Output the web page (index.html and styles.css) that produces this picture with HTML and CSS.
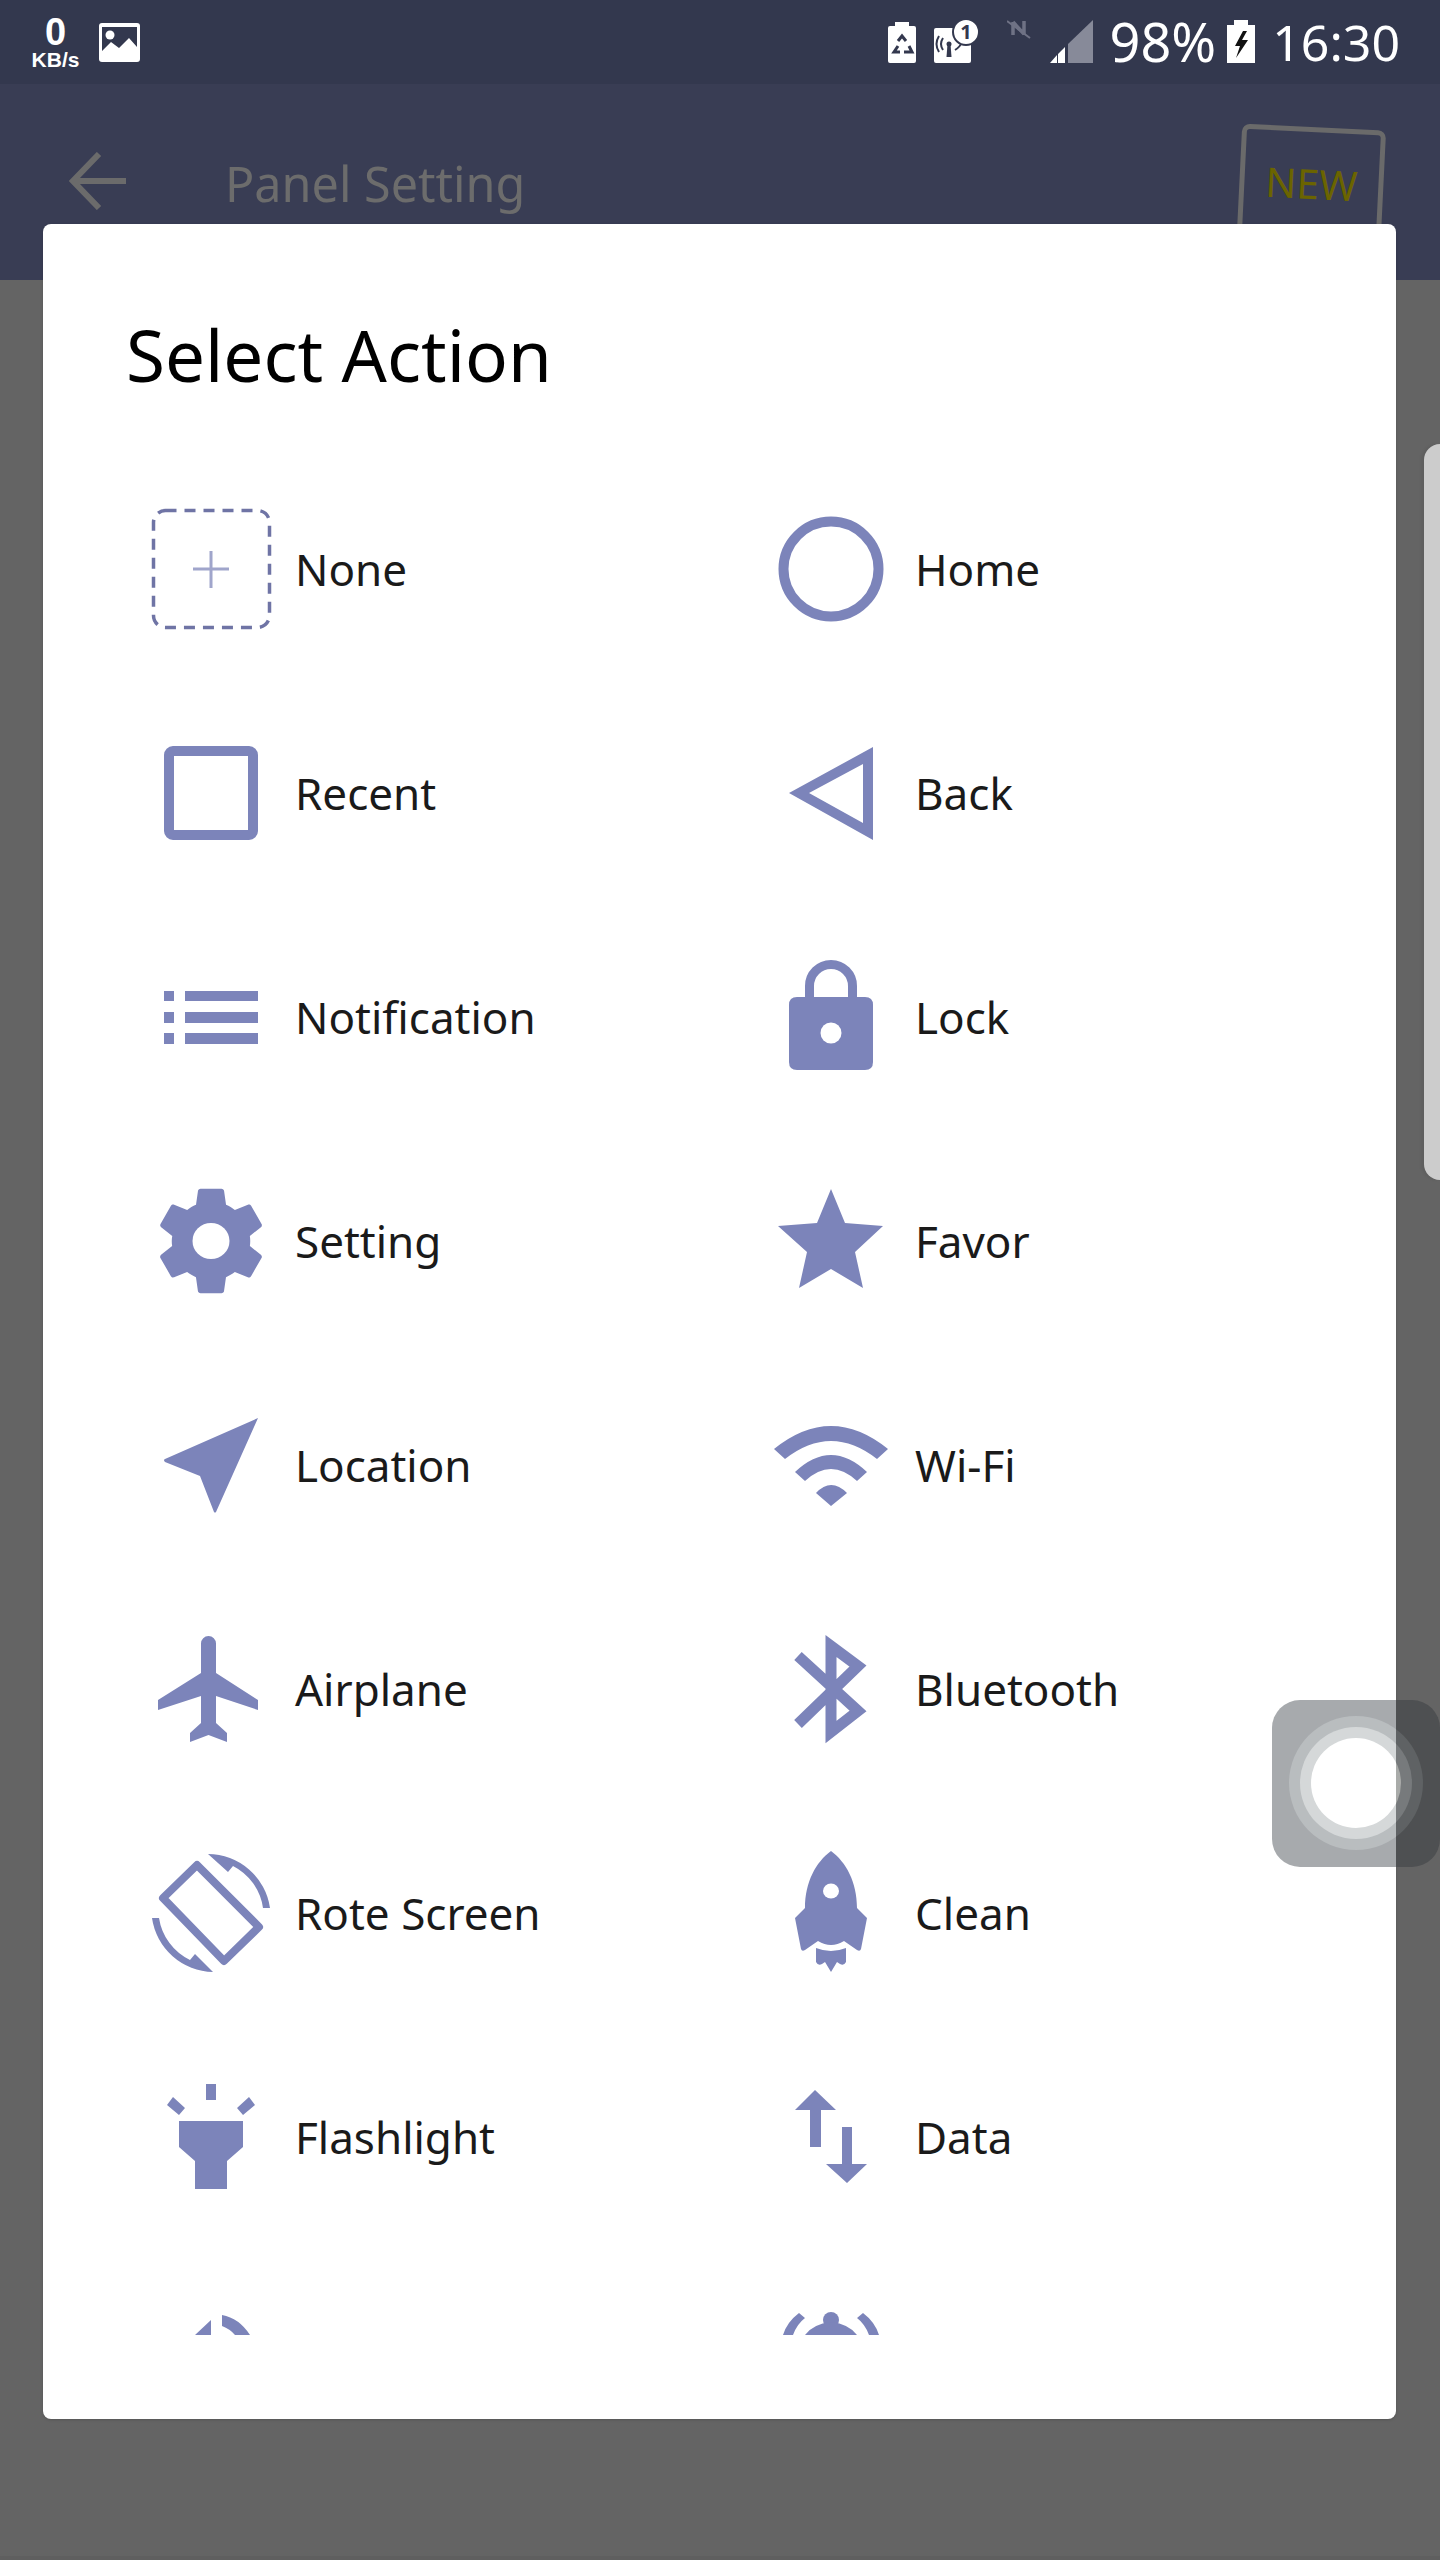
FILE: index.html
```html
<!DOCTYPE html>
<html lang="en">
<head>
    <meta charset="UTF-8">
    <meta name="viewport" content="width=device-width, initial-scale=1.0">
    <title>Select Action</title>
    <link rel="stylesheet" href="styles.css">
</head>
<body>
    <div class="status-bar">
        <div class="status-left">
            <div class="speed">
                <span class="speed-num">0</span>
                <span class="speed-unit">KB/s</span>
            </div>
            <svg class="st-image" width="41" height="39" viewBox="0 0 41 39">
                <rect width="41" height="39" rx="3" fill="#fff"/>
                <rect x="3" y="4" width="35" height="30" fill="#33384e"/>
                <circle cx="11" cy="12" r="4.5" fill="#fff"/>
                <path d="M3 28 L12 19 L20 25 L30 15 L38 24 V34 H3 Z" fill="#fff"/>
            </svg>
        </div>
        <div class="status-right">
            <svg class="st-recycle" width="28" height="41" viewBox="0 0 28 41">
                <path d="M7 0 H21 V4 H26 Q28 4 28 6 V39 Q28 41 26 41 H2 Q0 41 0 39 V6 Q0 4 2 4 H7 Z" fill="#fff"/>
                <path d="M10 19 L14 14 L18 19" fill="none" stroke="#33384e" stroke-width="3"/>
                <path d="M10 24 L6 30 H12" fill="none" stroke="#33384e" stroke-width="3"/>
                <path d="M21 24 L24 30 H16" fill="none" stroke="#33384e" stroke-width="3"/>
            </svg>
            <svg class="st-antenna" width="46" height="44" viewBox="0 0 46 44">
                <rect y="9" width="37" height="35" rx="2" fill="#fff"/>
                <circle cx="15" cy="25" r="2.5" fill="#33384e"/>
                <path d="M13.5 25 H16.5 L17.5 38 H12.5 Z" fill="#33384e"/>
                <path d="M9 19 Q5 25 9 31 M5 17 Q0 25 5 33 M21 31 Q26 28 28 23" fill="none" stroke="#33384e" stroke-width="2"/>
                <circle cx="32" cy="13" r="13" fill="#fff" stroke="#33384e" stroke-width="2"/>
                <text class="st-badge" x="32" y="20" text-anchor="middle">1</text>
            </svg>
            <svg class="st-nfc" width="24" height="19" viewBox="0 0 24 19">
                <path d="M6 2 V15 M17 1 V15 M6 2 L17 14" fill="none" stroke="#6f7285" stroke-width="3.5"/>
                <path d="M0 1 L23 18" fill="none" stroke="#6f7285" stroke-width="2"/>
            </svg>
            <svg class="st-signal" width="43" height="43" viewBox="0 0 43 43">
                <path d="M18 43 V24 L43 0 V43 Z" fill="#878a99"/>
                <path d="M0 43 L7 35 V43 Z M8 34 L15 27 V43 H8 Z" fill="#fff"/>
            </svg>
            <span class="st-text st-percent">98%</span>
            <svg class="st-charge" width="28" height="43" viewBox="0 0 28 43">
                <path d="M7 0 H21 V5 H28 V43 H0 V5 H7 Z" fill="#fff"/>
                <path d="M16 11 L8 26 H13 L9 38 L21 20 H15 L20 11 Z" fill="#111"/>
            </svg>
            <span class="st-text st-time">16:30</span>
        </div>
    </div>

    <div class="toolbar">
        <svg class="back-arrow" width="58" height="58" viewBox="0 0 58 58">
            <path d="M57 29 H5 M30 2 L4 29 L30 56" fill="none" stroke="#6b6b6b" stroke-width="6"/>
        </svg>
        <span class="toolbar-title">Panel Setting</span>
        <div class="new-badge"><span>NEW</span></div>
    </div>

    <div class="dialog">
        <h2 class="dialog-title">Select Action</h2>
        <div class="action-list">
            <div class="action">
                <svg class="icon" viewBox="0 0 120 120">
                    <rect class="dash" x="2.5" y="0.5" width="116" height="117" rx="12"/>
                    <path class="plus" d="M42 59 H78 M60 41 V78"/>
                </svg>
                <span>None</span>
            </div>
            <div class="action">
                <svg class="icon" viewBox="0 0 120 120">
                    <circle class="line" cx="60" cy="59" r="47.5" stroke-width="10"/>
                </svg>
                <span>Home</span>
            </div>
            <div class="action">
                <svg class="icon" viewBox="0 0 120 120">
                    <rect class="line" x="18" y="17" width="84" height="84" rx="4" stroke-width="10"/>
                </svg>
                <span>Recent</span>
            </div>
            <div class="action">
                <svg class="icon" viewBox="0 0 120 120">
                    <path fill-rule="evenodd" d="M18 59 L102 13 V106 Z M38 59 L92 89 V30 Z"/>
                </svg>
                <span>Back</span>
            </div>
            <div class="action">
                <svg class="icon" viewBox="0 0 120 120">
                    <path d="M13 33 H23 V43 H13 Z M34 33 H107 V43 H34 Z M13 54 H23 V65 H13 Z M34 54 H107 V65 H34 Z M13 75 H23 V86 H13 Z M34 75 H107 V86 H34 Z"/>
                </svg>
                <span>Notification</span>
            </div>
            <div class="action">
                <svg class="icon" viewBox="0 0 120 120">
                    <path class="line" stroke-width="9" d="M38.5 42 V28 a21.5 21.5 0 0 1 43 0 V42"/>
                    <path d="M26 39 H94 Q102 39 102 47 V104 Q102 112 94 112 H26 Q18 112 18 104 V47 Q18 39 26 39 Z"/>
                    <circle class="hole" cx="60" cy="75" r="10.5"/>
                </svg>
                <span>Lock</span>
            </div>
            <div class="action">
                <svg class="icon" viewBox="0 0 120 120">
                    <g transform="translate(60 59) scale(5.45) translate(-12 -12)">
                        <path d="M19.14 12.94c.04-.3.06-.61.06-.94 0-.32-.02-.64-.07-.94l2.03-1.58c.18-.14.23-.41.12-.61l-1.92-3.32c-.12-.22-.37-.29-.59-.22l-2.39.96c-.5-.38-1.03-.7-1.62-.94L14.4 2.81c-.04-.24-.24-.41-.48-.41h-3.84c-.24 0-.43.17-.47.41L9.25 5.35c-.59.24-1.13.57-1.62.94L5.24 5.33c-.22-.08-.47 0-.59.22L2.74 8.87c-.12.21-.08.47.12.61l2.03 1.58c-.05.3-.09.63-.09.94s.02.64.07.94l-2.03 1.58c-.18.14-.23.41-.12.61l1.92 3.32c.12.22.37.29.59.22l2.39-.96c.5.38 1.03.7 1.62.94l.36 2.54c.05.24.24.41.48.41h3.84c.24 0 .44-.17.47-.41l.36-2.54c.59-.24 1.13-.56 1.62-.94l2.39.96c.22.08.47 0 .59-.22l1.92-3.32c.12-.22.07-.47-.12-.61l-2.01-1.58z"/>
                    </g>
                    <ellipse class="hole" cx="60" cy="59" rx="18.5" ry="18"/>
                </svg>
                <span>Setting</span>
            </div>
            <div class="action">
                <svg class="icon" viewBox="0 0 120 120">
                    <path d="M60 7 L74 41 L112 44 L84 70 L92 106 L60 87 L28 106 L36 70 L7 44 L46 41 Z"/>
                </svg>
                <span>Favor</span>
            </div>
            <div class="action">
                <svg class="icon" viewBox="0 0 120 120">
                    <path d="M107 12 L65 106 Q64 107 63 106 L49 70 L14 56 Q12 54 14 53 Z"/>
                </svg>
                <span>Location</span>
            </div>
            <div class="action">
                <svg class="icon" viewBox="0 0 120 120">
                    <path d="M3 43 Q60 -3 117 43 L106 53 Q60 17 14 53 Z M24 66 Q60 32 96 66 L86 75 Q60 51 34 75 Z M45 87 Q60 71 76 87 L60 100 Z"/>
                </svg>
                <span>Wi-Fi</span>
            </div>
            <div class="action">
                <svg class="icon" viewBox="0 0 120 120">
                    <path d="M50 13.5 a7.5 7.5 0 0 1 15 0 V43 L107 70 V80 L65 66 V93 L76 103 V112 L57.5 105 L39 112 V103 L50 93 V66 L7 80 V70 L50 43 Z"/>
                </svg>
                <span>Airplane</span>
            </div>
            <div class="action">
                <svg class="icon" viewBox="0 0 120 120">
                    <path class="line" stroke-width="11" stroke-miterlimit="4" d="M27 26 L87 81 L60 102 V16 L87 36 L27 94"/>
                </svg>
                <span>Bluetooth</span>
            </div>
            <div class="action">
                <svg class="icon" viewBox="0 0 120 120">
                    <path class="line" stroke-width="8" stroke-linejoin="round" d="M46 11 L12 44 L73 107 L108 73 Z"/>
                    <path d="M57 0 A63 63 0 0 1 119 54 H112 A56 56 0 0 0 82 12 L77 18 Z M1 64 A63 63 0 0 0 62 118 L44 100 L39 106 A56 56 0 0 1 8 64 Z"/>
                </svg>
                <span>Rote Screen</span>
            </div>
            <div class="action">
                <svg class="icon" viewBox="0 0 120 120">
                    <path d="M60 -3 C45 8 34 28 34 54 L24 64 L30 95 Q31 98 34 96 L47 87 Q60 95 73 87 L86 96 Q89 98 90 95 L96 64 L86 54 C86 28 75 8 60 -3 Z"/>
                    <ellipse class="hole" cx="60" cy="37" rx="8" ry="7.5"/>
                    <path d="M45 94 Q60 100 75 94 V108 Q73 112 69 110 L66 108 L60 118 L54 108 L51 110 Q47 112 45 108 Z"/>
                </svg>
                <span>Clean</span>
            </div>
            <div class="action">
                <svg class="icon" viewBox="0 0 120 120">
                    <path d="M55 6 H65 V22 H55 Z M22 19 L34 30 L28 37 L16 27 Z M98 19 L86 30 L92 37 L104 27 Z M28 43 H92 V69 L76 83 V111 H44 V83 L28 69 Z"/>
                </svg>
                <span>Flashlight</span>
            </div>
            <div class="action">
                <svg class="icon" viewBox="0 0 120 120">
                    <path d="M44 12 L65 32 H50 V69 H39 V32 H24 Z M71 49 H81 V86 H96 L76 105 L55 86 H71 Z"/>
                </svg>
                <span>Data</span>
            </div>
            <div class="action">
                <svg class="icon" viewBox="0 0 120 120">
                    <path d="M60 18 V33 H44 Z M71 13 Q88 16 99 33 H84 Q79 27 71 24 Z"/>
                </svg>
            </div>
            <div class="action">
                <svg class="icon" viewBox="0 0 120 120">
                    <circle cx="60" cy="18" r="8"/>
                    <path d="M34 33 Q42 22 60 20 Q78 22 86 33 Z M28 11 L34 16 Q26 22 22 33 H12 Q16 20 28 11 Z M92 11 L86 16 Q94 22 98 33 H108 Q104 20 92 11 Z"/>
                </svg>
            </div>
        </div>
    </div>

    <div class="edge-handle"></div>

    <svg class="float-button" width="168" height="167" viewBox="0 0 168 167">
        <defs>
            <clipPath id="onDialog"><rect width="124" height="167"/></clipPath>
            <clipPath id="onScrim"><rect x="124" width="44" height="167"/></clipPath>
        </defs>
        <g clip-path="url(#onDialog)">
            <rect width="168" height="167" rx="28" fill="#a7aaad"/>
            <circle cx="84" cy="83" r="67" fill="#b9bdbf"/>
            <circle cx="84" cy="83" r="56" fill="#d5d8d9"/>
            <circle cx="84" cy="83" r="45" fill="#fff"/>
        </g>
        <g clip-path="url(#onScrim)">
            <rect width="168" height="167" rx="28" fill="#4e5052"/>
            <circle cx="84" cy="83" r="67" fill="#5f6264"/>
            <circle cx="84" cy="83" r="56" fill="#777a7c"/>
            <circle cx="84" cy="83" r="45" fill="#a9aba9"/>
        </g>
    </svg>

    <div class="bottom-strip"></div>
</body>
</html>
```
FILE: styles.css
```css
html, body {
    margin: 0;
    padding: 0;
}
body {
    position: relative;
    width: 1440px;
    height: 2560px;
    overflow: hidden;
    background-color: #646464;
    font-family: "Noto Sans", sans-serif;
}
.status-bar {
    height: 84px;
    background-color: #33384e;
    display: flex;
    justify-content: space-between;
    color: #ffffff;
    padding: 0 40px 0 31px;
    box-sizing: border-box;
}
.status-left {
    display: flex;
    align-items: flex-start;
}
.speed {
    width: 49px;
    display: flex;
    flex-direction: column;
    align-items: center;
    font-family: "Liberation Sans", sans-serif;
    font-weight: bold;
    padding-top: 13px;
}
.speed-num {
    font-size: 38px;
    line-height: 38px;
}
.speed-unit {
    font-size: 21px;
    line-height: 18px;
}
.st-image {
    margin: 23px 0 0 19px;
}
.status-right {
    display: flex;
    align-items: flex-start;
}
.status-right svg {
    display: block;
}
.st-recycle {
    margin-top: 22px;
}
.st-antenna {
    margin: 19px 0 0 18px;
}
.st-badge {
    font-size: 20px;
    font-weight: bold;
    fill: #33384e;
}
.st-nfc {
    margin: 20px 0 0 27px;
}
.st-signal {
    margin: 20px 0 0 19px;
}
.st-text {
    font-size: 50px;
    line-height: 84px;
    height: 84px;
}
.st-percent {
    margin-left: 17px;
    font-size: 54px;
    line-height: 82px;
}
.st-charge {
    margin: 20px 0 0 11px;
}
.st-time {
    margin-left: 17px;
}

.toolbar {
    height: 196px;
    background-color: #393d54;
    display: flex;
    align-items: flex-start;
    position: relative;
    padding-left: 69px;
}
.back-arrow {
    margin-top: 68px;
}
.toolbar-title {
    margin: 66px 0 0 98px;
    font-size: 48.5px;
    line-height: 66px;
    color: #6c6c6c;
}
.new-badge {
    width: 144px;
    height: 130px;
    box-sizing: border-box;
    border: 5px solid #6a6a6a;
    border-radius: 8px;
    transform: rotate(2.8deg);
    margin: 43px 57px 0 auto;
    text-align: center;
    color: #6b6400;
    font-size: 41px;
    line-height: 50px;
    padding-top: 26px;
}

.dialog {
    position: absolute;
    top: 224px;
    left: 43px;
    width: 1353px;
    height: 2195px;
    background-color: #ffffff;
    border-radius: 8px;
    box-shadow: 0 1px 3px rgba(0, 0, 0, 0.15);
}
.dialog-title {
    margin: 0;
    padding: 86px 0 0 83px;
    height: 150px;
    box-sizing: border-box;
    font-size: 71px;
    line-height: 90px;
    font-weight: normal;
    color: #000000;
}
.action-list {
    margin-top: 84px;
    height: 1877px;
    overflow: hidden;
    display: grid;
    grid-template-columns: 620px 1fr;
    grid-auto-rows: 224px;
    padding-left: 108px;
}
.action {
    display: flex;
    align-items: center;
    gap: 24px;
    font-size: 44px;
    color: #1a1a1a;
}
.action span {
    padding-bottom: 2px;
}
.icon {
    width: 120px;
    height: 120px;
    flex: none;
    overflow: visible;
    fill: #7c84ba;
}
.icon .line {
    fill: none;
    stroke: #7c84ba;
}
.icon .dash {
    fill: none;
    stroke: #6f74a5;
    stroke-width: 3.5;
    stroke-dasharray: 11 8;
}
.icon .plus {
    fill: none;
    stroke: #a0a5cb;
    stroke-width: 3;
}
.icon .hole {
    fill: #ffffff;
}

.edge-handle {
    position: absolute;
    top: 444px;
    right: 0;
    width: 16px;
    height: 736px;
    background-color: #cccccc;
    border-radius: 16px 0 0 16px;
    box-shadow: -3px 0 3px rgba(0, 0, 0, 0.06);
}
.float-button {
    position: absolute;
    top: 1700px;
    right: 0;
}
.bottom-strip {
    position: absolute;
    left: 0;
    right: 0;
    bottom: 0;
    height: 4px;
    background-color: #5f5f5f;
}
```
